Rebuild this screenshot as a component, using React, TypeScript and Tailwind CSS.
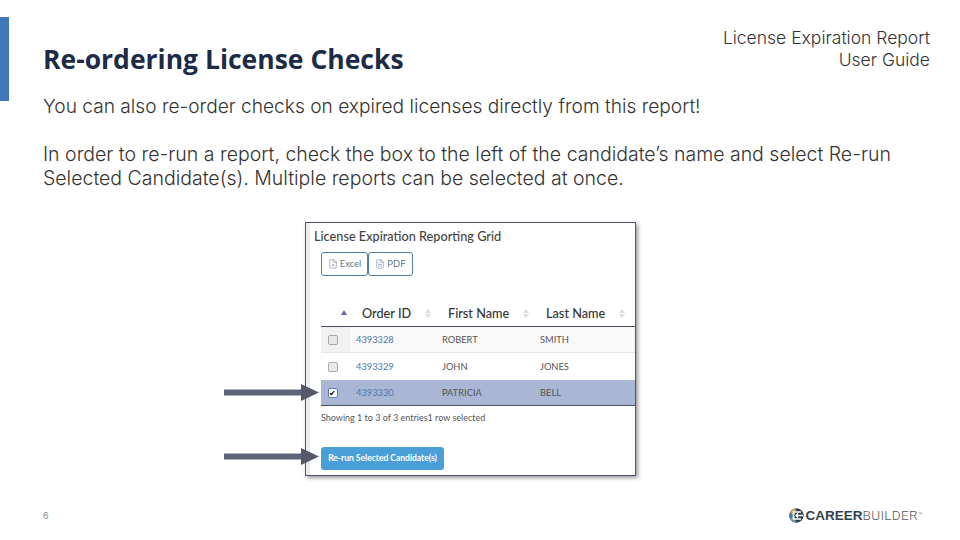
import { FileText, FileX } from "lucide-react";

interface Candidate {
    id: string,
    first: string,
    last: string,
    selected?: boolean
}

const candidates: Candidate[] = [
    { id: "4393328", first: "ROBERT", last: "SMITH" },
    { id: "4393329", first: "JOHN", last: "JONES" },
    { id: "4393330", first: "PATRICIA", last: "BELL", selected: true },
]

function SortArrows() {
    return (
        <span className="flex flex-col gap-[1px]">
            <span className="w-0 h-0 border-x-[3px] border-x-transparent border-b-[4px] border-b-[#dcdcdc]"></span>
            <span className="w-0 h-0 border-x-[3px] border-x-transparent border-t-[4px] border-t-[#dcdcdc]"></span>
        </span>
    )
}

function Arrow({ top }: { top: number }) {
    return (
        <svg className="absolute left-[-82px]" style={{ top }} width="98" height="20" viewBox="0 0 98 20">
            <rect x="0" y="5.5" width="80" height="6" fill="#5f6274" />
            <path d="M77 0 L95 8.5 L77 17 Z" fill="#55586b" />
        </svg>
    )
}

function GridCard() {
    return (
        <div className="relative w-[331px] h-[254px] bg-white border border-[#50566e] shadow-[2px_2px_4px_rgba(0,0,0,0.4)] font-['Lato',sans-serif] flex">
            <div className="w-[4px] bg-[#ececec]"></div>
            <div className="flex-1 flex flex-col">
                <div className="text-[12.7px] leading-[16px] font-medium text-[#444] ml-[4px] mt-[5px]">License Expiration Reporting Grid</div>
                <div className="flex ml-[11px] mt-[8px] text-[9.5px] text-[#5f7a95]">
                    <div className="w-[47px] h-[24px] flex items-center justify-center gap-[2px] border-[1.5px] border-[#4f81a8] rounded-[3px]">
                        <FileX size={10} strokeWidth={1.25} />
                        <span>Excel</span>
                    </div>
                    <div className="w-[45px] h-[24px] flex items-center justify-center gap-[2px] border-[1.5px] border-[#4f81a8] rounded-[3px]">
                        <FileText size={10} strokeWidth={1.25} />
                        <span>PDF</span>
                    </div>
                </div>

                {/* Таблица */}
                <div className="ml-[11px] mt-[22px]">
                    <div className="h-[29px] pt-[4px] flex items-center border-b border-[#4a4f60] text-[12.7px] font-medium text-[#333]">
                        <div className="w-[29px] flex justify-center">
                            <span className="w-0 h-0 border-x-[3px] border-x-transparent border-b-[5px] border-b-[#6a62b0] mb-[4px] ml-[16px]"></span>
                        </div>
                        <div className="w-[86px] pl-[12px] flex items-center gap-[14px]"><span>Order ID</span><SortArrows /></div>
                        <div className="w-[98px] pl-[12px] flex items-center gap-[14px]"><span>First Name</span><SortArrows /></div>
                        <div className="flex-1 pl-[12px] flex items-center gap-[14px]"><span>Last Name</span><SortArrows /></div>
                    </div>
                    {candidates.map((c, i) => (
                        <div key={c.id} className={`flex items-center text-[9.3px] text-[#555] ${i == 1 ? "h-[27px]" : "h-[26px]"} ${c.selected ? "bg-[#a9b6d4] border-b border-[#4a4f60]" : i == 0 ? "bg-[#f9f9f9] border-b border-[#e4e4e4]" : "bg-white"}`}>
                            <div className={`w-[29px] h-full pr-[6px] flex items-center justify-center ${i == 0 ? "bg-[#f1f1f1]" : ""}`}>
                                <span className={`w-[10px] h-[10px] rounded-[2px] border flex items-center justify-center text-[8px] leading-none ${c.selected ? "bg-white border-[#5a7fb8] text-black" : "bg-[#e9e9e9] border-[#aaa]"}`}>{c.selected ? "✔" : ""}</span>
                            </div>
                            <div className="w-[86px] pl-[6px] text-[#4a78b0]">{c.id}</div>
                            <div className="w-[98px] pl-[6px]">{c.first}</div>
                            <div className="flex-1 pl-[6px]">{c.last}</div>
                        </div>
                    ))}
                </div>

                <div className="ml-[11px] mt-[5px] text-[9px] leading-[14px] text-[#555]">Showing 1 to 3 of 3 entries1 row selected</div>
                <div className="ml-[11px] mt-[22px] w-[123px] h-[23px] rounded-[3px] bg-[#4a9fd8] text-white text-[8.5px] font-bold flex items-center justify-center">Re-run Selected Candidate(s)</div>
            </div>
            <Arrow top={161} />
            <Arrow top={225} />
        </div>
    )
}

export default function App() {
    return (
        <div className="w-[960px] h-[540px] bg-white overflow-hidden flex font-['Inter',sans-serif]">
            {/* Синяя полоса слева */}
            <div className="w-[9px] h-[84px] mt-[17px] bg-[#3f78b8] shrink-0"></div>

            <div className="flex-1 pl-[34px] pr-[30px] flex flex-col">
                <div className="flex justify-between h-[80px]">
                    <h1 className="mt-[41px] text-[26.5px] leading-[36px] font-bold text-[#1d2b47] font-['Open_Sans',sans-serif]">Re-ordering License Checks</h1>
                    <div className="mt-[27px] text-right text-[17.5px] leading-[22px] font-light text-[#333]">
                        <div>License Expiration Report</div>
                        <div>User Guide</div>
                    </div>
                </div>

                <div className="mt-[14px] text-[19.5px] leading-[24px] font-light text-[#333]">
                    <p className="text-[19.15px]">You can also re-order checks on expired licenses directly from this report!</p>
                    <p className="mt-[24px]">In order to re-run a report, check the box to the left of the candidate’s name and select Re-run Selected Candidate(s). Multiple reports can be selected at once.</p>
                </div>

                <div className="mt-[32px] ml-[262px]">
                    <GridCard />
                </div>

                <div className="mt-[32px] flex items-center justify-between pr-[8px]">
                    <span className="text-[9px] text-[#888]">6</span>
                    <div className="flex items-center gap-[2px]">
                        <svg width="15" height="15" viewBox="0 0 15 15">
                            <circle cx="7.5" cy="7.5" r="7.2" fill="#2f4256" />
                            <path d="M7.5 0.3 A7.2 7.2 0 0 0 1 4.5 L5 7.5 Z" fill="#c9a25a" />
                            <path d="M1 4.5 A7.2 7.2 0 0 0 1 10.5 L5 7.5 Z" fill="#3f7fb5" />
                            <path d="M1 10.5 A7.2 7.2 0 0 0 7.5 14.7 L5 7.5 Z" fill="#5f9a8a" />
                            <path d="M12 4 H4.5 V11 H12" fill="none" stroke="#fff" strokeWidth="1.6" />
                            <path d="M14 7.5 H7 M9 5.5 L7 7.5 L9 9.5" fill="none" stroke="#fff" strokeWidth="1.4" />
                        </svg>
                        <span className="text-[13.5px] leading-none text-[#333f4d] font-['Liberation_Sans',sans-serif]"><b>CAREER</b><span className="font-light text-[#555] tracking-[0.35px] font-['Roboto',sans-serif]">BUILDER</span><span className="text-[4px] align-super text-[#555]">™</span></span>
                    </div>
                </div>
            </div>
        </div>
    )
}
